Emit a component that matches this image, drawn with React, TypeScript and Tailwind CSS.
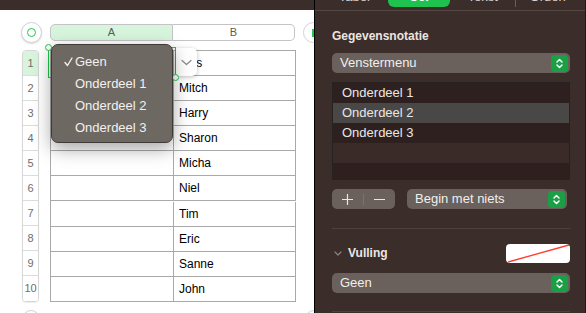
import React from "react";

const FONT = { fontFamily: '"Liberation Sans", Arial, sans-serif' };

const Stepper = () => (
  <div className="w-[17px] h-[17px] rounded-[4px] bg-[#1a9f47] flex items-center justify-center shrink-0">
    <svg width="9" height="13" viewBox="0 0 9 13" fill="none" stroke="white" strokeWidth="1.5" strokeLinecap="round" strokeLinejoin="round">
      <path d="M2 5 L4.5 2.5 L7 5" />
      <path d="M2 8 L4.5 10.5 L7 8" />
    </svg>
  </div>
);

const Popup = ({ label, w }: { label: string; w?: string }) => (
  <div className={`h-[20px] rounded-[5px] bg-[#6a605c] flex items-center justify-between pl-[8px] pr-[2px] text-[13px] text-[#f2eeeb] ${w ?? "w-full"}`}>
    <span>{label}</span>
    <Stepper />
  </div>
);

const names = ["Lars", "Mitch", "Harry", "Sharon", "Micha", "Niel", "Tim", "Eric", "Sanne", "John"];

function Sheet() {
  return (
    <div className="relative w-[314px] h-[313px] overflow-hidden bg-white shrink-0">
      <div className="h-[10px] bg-[#3b2d2a]" />
      <div className="flex items-center mt-[12px] h-[21px]">
        <div className="ml-[21px] w-[21px] h-[21px] rounded-full bg-white border border-[#d2d2d2] shadow-[0_1px_2px_rgba(0,0,0,0.15)] flex items-center justify-center shrink-0">
          <div className="w-[9px] h-[9px] rounded-full border-[1.5px] border-[#1ec94c]" />
        </div>
        <div className="ml-[8px] flex h-[17px] shrink-0 text-[11px] text-[#5a5a5a]">
          <div className="w-[123px] bg-[#d6f5dc] border border-[#c4c4c4] rounded-l-[5px] flex items-center justify-center">A</div>
          <div className="w-[122px] bg-white border border-l-0 border-[#c4c4c4] rounded-r-[5px] flex items-center justify-center">B</div>
        </div>
        <div className="ml-[8px] w-[21px] h-[21px] rounded-full bg-white border border-[#d2d2d2] shrink-0 flex items-center">
          <div className="ml-[8px] w-[1.5px] h-[8px] bg-[#1ec94c]" />
        </div>
      </div>
      <div className="mt-[7px] ml-[22px] flex">
        <div className="w-[17px] border border-[#d6d6d6] rounded-[4px] overflow-hidden flex flex-col shrink-0 shadow-[0_1px_1px_rgba(0,0,0,0.08)]">
          {names.map((_, i) => (
            <div
              key={i}
              className={`h-[25px] flex items-center justify-center text-[11px] text-[#6e6e6e] ${i < 9 ? "border-b border-[#dcdcdc]" : ""} ${i === 0 ? "bg-[#d6f5dc]" : "bg-white"}`}
            >
              {i + 1}
            </div>
          ))}
        </div>
        <div className="ml-[11px] grid grid-cols-[123px_122px] border-l border-t border-[#a9a9a9] shrink-0">
          {names.map((n, i) => (
            <React.Fragment key={i}>
              <div className="h-[25px] border-r border-b border-[#a9a9a9]" />
              <div className="h-[25px] border-r border-b border-[#a9a9a9] flex items-center pl-[5px] text-[12px] text-black">{n}</div>
            </React.Fragment>
          ))}
        </div>
      </div>
      <div className="mt-[8px] flex">
        <div className="ml-[22px] w-[18px] h-[18px] rounded-full border border-[#d2d2d2] bg-white shrink-0" />
        <div className="ml-[265px] w-[18px] h-[18px] rounded-full border border-[#d2d2d2] bg-white shrink-0" />
      </div>

      {/* selection */}
      <div className="absolute left-[48px] top-[47px] w-[128px] h-[31px] border-[1.5px] border-[#1ec94c]" />
      <div className="absolute left-[45px] top-[44px] w-[7px] h-[7px] rounded-full bg-white border-[1.5px] border-[#1ec94c]" />
      {/* chevron button */}
      <div className="absolute left-[176px] top-[48px] w-[21px] h-[28px] bg-white rounded-r-[5px] shadow-[0_1px_4px_rgba(0,0,0,0.25)] flex items-center justify-center">
        <svg width="11" height="7" viewBox="0 0 11 7" fill="none" stroke="#8a8a8a" strokeWidth="1.2" strokeLinecap="round" strokeLinejoin="round">
          <path d="M1 1.5 L5.5 5.5 L10 1.5" />
        </svg>
      </div>
      <div className="absolute left-[172px] top-[74px] w-[7px] h-[7px] rounded-full bg-white border-[1.5px] border-[#1ec94c]" />
      {/* menu */}
      <div className="absolute left-[51px] top-[44px] w-[122px] h-[99px] rounded-[7px] bg-[#6e6863] border border-[#3d3a37] shadow-[0_6px_18px_rgba(0,0,0,0.35)] py-[6px] text-[13px] text-[#f4f0ed]">
        <div className="h-[22px] flex items-center">
          <svg className="ml-[12px]" width="9" height="10" viewBox="0 0 9 10" fill="none" stroke="#f4f0ed" strokeWidth="1.4" strokeLinecap="round" strokeLinejoin="round">
            <path d="M1 5.5 L3.5 8.5 L8 1" />
          </svg>
          <span className="ml-[2px]">Geen</span>
        </div>
        {["Onderdeel 1", "Onderdeel 2", "Onderdeel 3"].map((t) => (
          <div key={t} className="h-[22px] flex items-center pl-[23px]">{t}</div>
        ))}
      </div>
    </div>
  );
}

function Panel() {
  const rows = ["Onderdeel 1", "Onderdeel 2", "Onderdeel 3", "", ""];
  return (
    <div className="w-[272px] h-[313px] bg-[#3b2d2a] border-l border-l-black border-r border-r-[#221816] flex flex-col overflow-hidden shrink-0 text-[#ebe6e3]">
      <div className="h-[11px] overflow-hidden border-b border-[#554845] shrink-0">
        <div className="-mt-[13px] ml-[7px] w-[258px] h-[20px] grid grid-cols-4 text-[13px] text-[#d9d3d0]">
          <div className="flex items-center justify-center">Tabel</div>
          <div className="flex items-center justify-center bg-[#1dc24f] rounded-[6px] text-white font-bold mx-[1px]">Cel</div>
          <div className="flex items-center justify-center border-r border-[#6a5e5a]">Tekst</div>
          <div className="flex items-center justify-center">Orden</div>
        </div>
      </div>
      <div className="pl-[17px] pr-[15px] flex flex-col">
        <div className="mt-[18px] h-[15px] leading-[15px] text-[12px] font-bold">Gegevensnotatie</div>
        <div className="mt-[9px]"><Popup label="Venstermenu" /></div>
        <div className="mt-[9px] h-[98px] border border-[#262221] overflow-hidden text-[13px]">
          {rows.map((r, i) => (
            <div
              key={i}
              className={`h-[20px] flex items-center pl-[9px] ${i === 1 ? "bg-[#4a4847]" : i % 2 === 0 ? "bg-[#2e201e]" : "bg-[#3a2b28]"}`}
            >
              {r}
            </div>
          ))}
        </div>
        <div className="mt-[9px] flex items-center">
          <div className="w-[63px] h-[20px] rounded-[5px] bg-[#6a605c] flex items-center">
            <div className="w-[31px] flex items-center justify-center">
              <svg width="11" height="11" viewBox="0 0 11 11" stroke="#ece7e4" strokeWidth="1.2" strokeLinecap="round">
                <path d="M5.5 0.5 V10.5 M0.5 5.5 H10.5" />
              </svg>
            </div>
            <div className="w-[1px] h-[11px] bg-[#7c726e]" />
            <div className="w-[31px] flex items-center justify-center">
              <svg width="11" height="11" viewBox="0 0 11 11" stroke="#ece7e4" strokeWidth="1.2" strokeLinecap="round">
                <path d="M0.5 5.5 H10.5" />
              </svg>
            </div>
          </div>
          <div className="ml-[12px]"><Popup label="Begin met niets" w="w-[160px]" /></div>
        </div>
        <div className="mt-[19px] h-[1px] bg-[#4d4140]" />
        <div className="mt-[14px] h-[20px] flex items-center">
          <svg className="ml-[2px]" width="8" height="5" viewBox="0 0 8 5" fill="none" stroke="#8c827e" strokeWidth="1.2" strokeLinecap="round" strokeLinejoin="round">
            <path d="M1 1 L4 4 L7 1" />
          </svg>
          <span className="ml-[6px] text-[12px] font-bold">Vulling</span>
          <div className="ml-auto w-[64px] h-[19px] rounded-[4px] bg-white overflow-hidden">
            <svg width="64" height="19" viewBox="0 0 64 19">
              <line x1="2" y1="18" x2="63" y2="1" stroke="#ff3b30" strokeWidth="1.3" />
            </svg>
          </div>
        </div>
        <div className="mt-[10px]"><Popup label="Geen" /></div>
        <div className="mt-[18px] h-[1px] bg-[#4d4140]" />
      </div>
    </div>
  );
}

export default function App() {
  return (
    <div className="w-[586px] h-[313px] flex overflow-hidden" style={FONT}>
      <Sheet />
      <Panel />
    </div>
  );
}
